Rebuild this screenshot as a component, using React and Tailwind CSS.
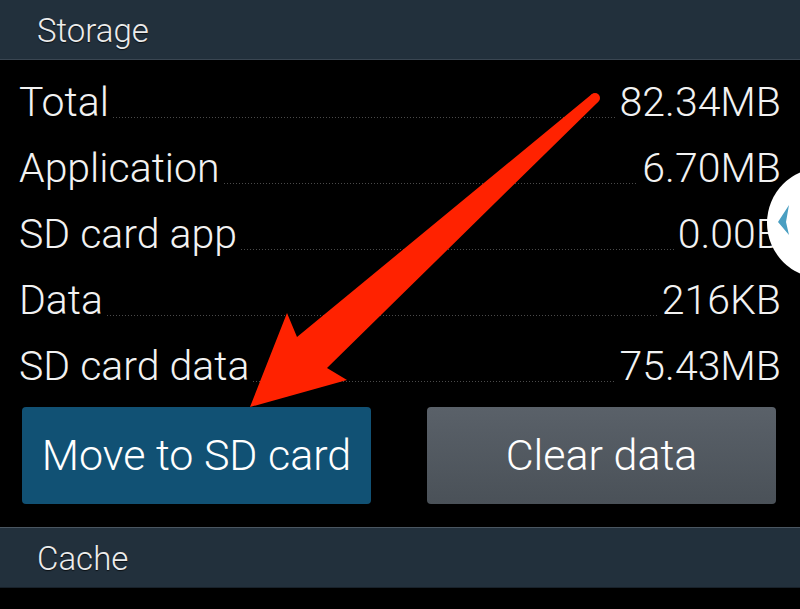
import React from "react";

const rows = [
  { label: "Total", value: "82.34MB" },
  { label: "Application", value: "6.70MB" },
  { label: "SD card app", value: "0.00B" },
  { label: "Data", value: "216KB" },
  { label: "SD card data", value: "75.43MB" },
];

const SectionHeader = ({ title, className }) => (
  <div
    className={`h-[60px] bg-[#22303c] pl-[37px] pt-[3px] text-[33px] leading-[56px] text-[#ececec] [text-shadow:0_1px_1px_rgba(0,0,0,0.7)] ${className}`}
  >
    {title}
  </div>
);

const StorageRow = ({ label, value }) => (
  <div className="flex items-baseline h-[66px] leading-[66px]">
    <span>{label}</span>
    <div className="flex-1 h-px mx-[4px] translate-y-[2px] bg-[linear-gradient(to_right,#4a4a4a_1px,transparent_1px)] bg-[length:3px_1px]" />
    <span>{value}</span>
  </div>
);

const Arrow = () => (
  <svg
    className="absolute inset-0 pointer-events-none"
    width="800"
    height="609"
    viewBox="0 0 800 609"
  >
    <path
      d="M591.7,94.3 L297,337 L287,313 L250,407 L347,380 L327,368 L598.3,101.7 Z"
      fill="#ff2200"
    />
    <circle cx="595" cy="98" r="5" fill="#ff2200" />
  </svg>
);

const SideHandle = () => (
  <div className="absolute left-[767px] top-[168px] w-[110px] h-[110px] rounded-full bg-white">
    <svg className="absolute left-[10px] top-[36px]" width="16" height="32" viewBox="0 0 16 32">
      <path d="M12,1 L1,18 L12,31 L9,18 Z" fill="#4a9fc2" />
    </svg>
  </div>
);

export default function App() {
  return (
    <div className="relative w-[800px] h-[609px] overflow-hidden bg-black font-['Roboto',sans-serif] font-light">
      <SectionHeader title="Storage" className="border-b border-[#3a4652]" />
      <div className="px-[19px] pt-[9px] text-[41px] text-[#f2f2f2]">
        {rows.map((r) => (
          <StorageRow key={r.label} {...r} />
        ))}
      </div>
      <div className="flex gap-[56px] pl-[22px] pr-[24px] mt-[8px]">
        <button className="flex-1 h-[97px] rounded-[4px] bg-[#115174] text-[43px] text-white">
          Move to SD card
        </button>
        <button className="flex-1 h-[97px] rounded-[4px] bg-[linear-gradient(to_bottom,#5a6169,#4a5158)] text-[43px] text-white">
          Clear data
        </button>
      </div>
      <SectionHeader
        title="Cache"
        className="mt-[23px] h-[61px] border-t border-[#4a5661] border-b border-b-[#18212a]"
      />
      <SideHandle />
      <Arrow />
    </div>
  );
}
